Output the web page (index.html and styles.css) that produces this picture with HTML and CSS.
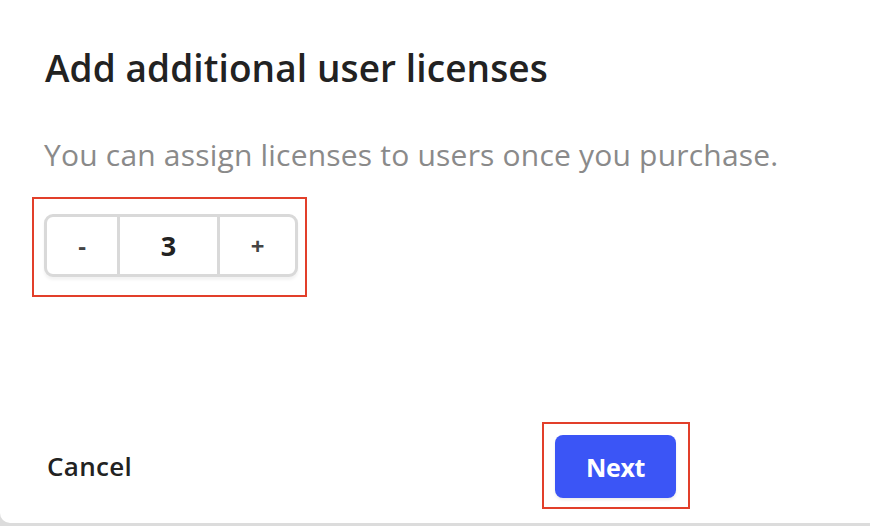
FILE: index.html
```html
<!DOCTYPE html>
<html>
<head>
<meta charset="utf-8">
<link rel="stylesheet" href="styles.css">
</head>
<body>
<div class="modal">
  <h1 class="title">Add additional user licenses</h1>
  <p class="subtitle">You can assign licenses to users once you purchase.</p>
  <div class="highlight stepper-wrap">
    <div class="stepper">
      <button class="step-btn">-</button>
      <div class="step-value">3</div>
      <button class="step-btn">+</button>
    </div>
  </div>
  <div class="footer">
    <button class="cancel">Cancel</button>
    <div class="highlight next-wrap">
      <button class="next">Next</button>
    </div>
  </div>
</div>
<div class="behind"></div>
</body>
</html>
```
FILE: styles.css
```css
html, body {
  margin: 0;
  padding: 0;
}
body {
  width: 870px;
  height: 526px;
  overflow: hidden;
  background: #dcdcdc;
  font-family: "Open Sans", Lato, "Liberation Sans", sans-serif;
}
.modal {
  height: 523px;
  box-sizing: border-box;
  background: #fff;
  border-bottom-left-radius: 10px;
  padding: 46px 0 0 45px;
  display: flex;
  flex-direction: column;
}
.title {
  margin: 0;
  font-size: 37px;
  font-weight: 600;
  color: #222;
  line-height: 44px;
  letter-spacing: 0.1px;
}
.subtitle {
  margin: 47px 0 0 -1px;
  font-size: 30px;
  font-weight: 400;
  color: #8a8a8a;
  line-height: 36px;
  letter-spacing: 0.2px;
}
.highlight {
  border: 2.5px solid #e23f2a;
  box-sizing: border-box;
}
.stepper-wrap {
  align-self: flex-start;
  margin: 24px 0 0 -13px;
  width: 275px;
  height: 100px;
  padding: 15px 0 0 10px;
}
.stepper {
  display: flex;
  width: 254px;
  height: 63px;
  box-sizing: border-box;
  border: 3px solid #d9d9d9;
  border-radius: 9px;
  background: #fff;
  box-shadow: 0 3px 3px rgba(0,0,0,0.05);
}
.step-btn {
  width: 70px;
  border: none;
  background: transparent;
  font-family: inherit;
  font-size: 24px;
  font-weight: 700;
  color: #444;
  padding: 0;
}
.step-btn:last-child {
  flex: 1;
}
.step-value {
  width: 97px;
  border-left: 3px solid #d9d9d9;
  border-right: 3px solid #d9d9d9;
  display: flex;
  align-items: center;
  justify-content: center;
  font-size: 27px;
  font-weight: 700;
  color: #222;
}
.footer {
  margin-top: auto;
  margin-bottom: 14px;
  display: flex;
  align-items: center;
  justify-content: space-between;
  width: 645px;
}
.cancel {
  border: none;
  background: transparent;
  padding: 0 0 0 2px;
  font-family: inherit;
  font-size: 26px;
  font-weight: 600;
  color: #222;
  letter-spacing: 0.3px;
}
.next-wrap {
  width: 148px;
  height: 87px;
  padding: 11px 0 0 11px;
}
.next {
  width: 121px;
  height: 63px;
  border: none;
  border-radius: 8px;
  background: #3b55f6;
  color: #fff;
  font-family: inherit;
  font-size: 25px;
  font-weight: 700;
  letter-spacing: -0.3px;
  box-shadow: 0 2px 3px rgba(0,0,0,0.08);
}
.behind {
  height: 3px;
}
```
